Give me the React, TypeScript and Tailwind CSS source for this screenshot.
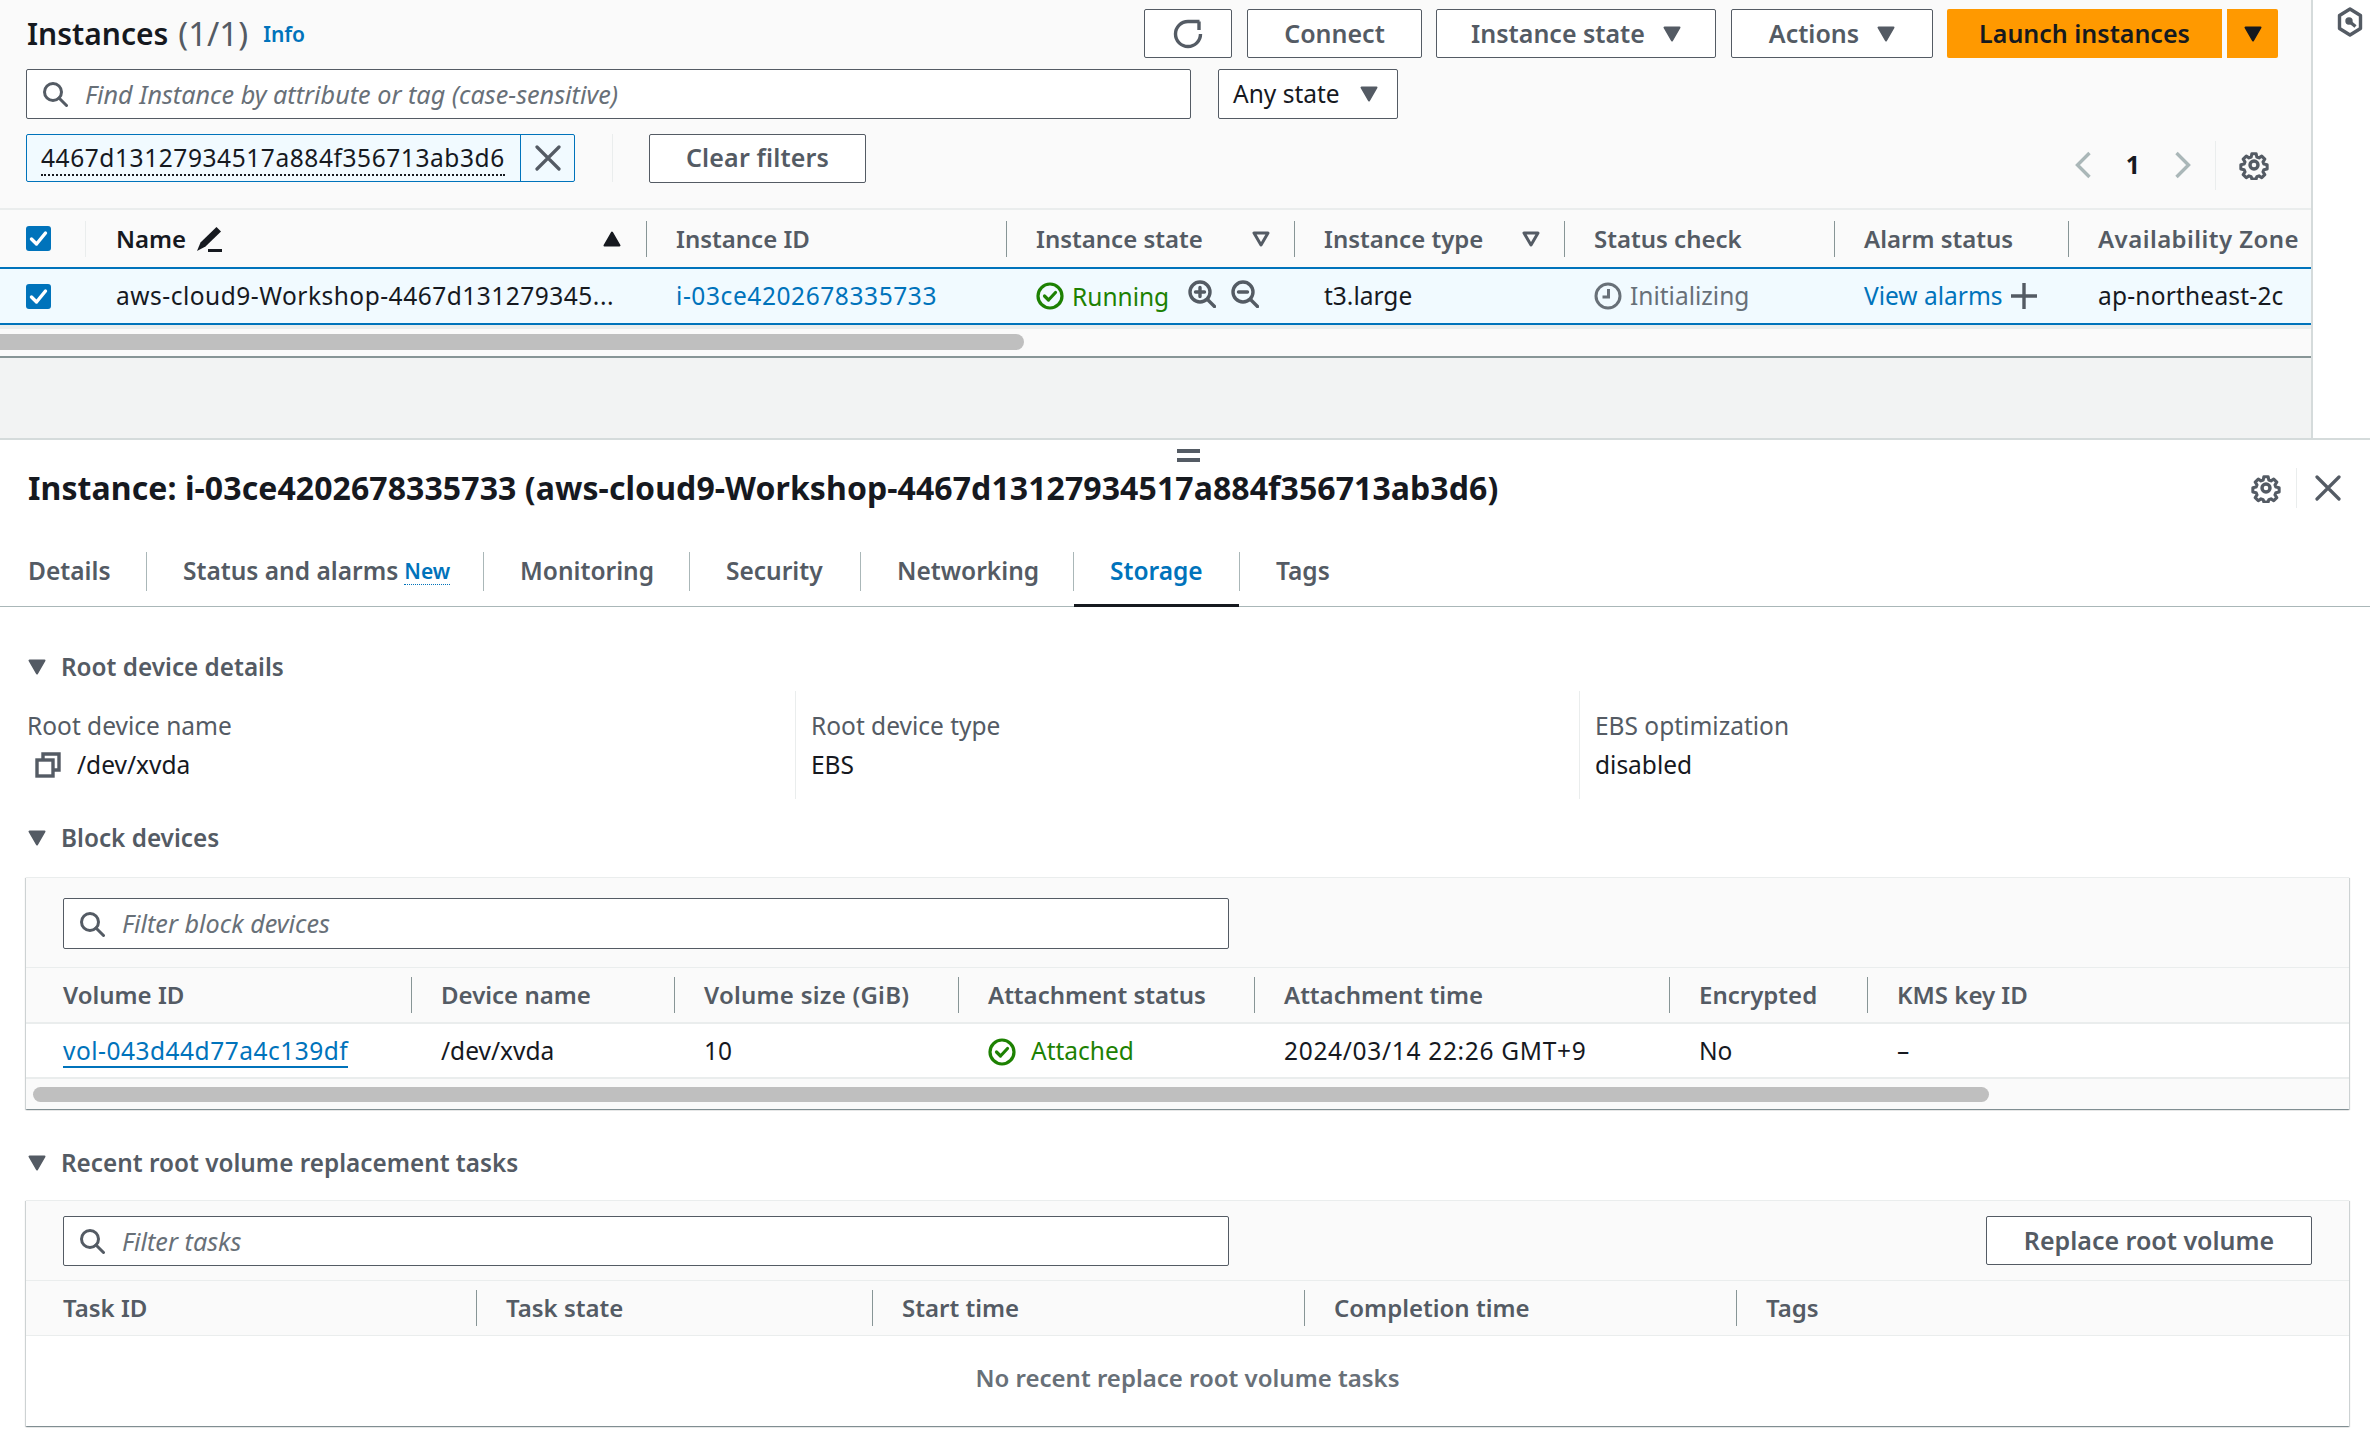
import type { ReactNode } from 'react'

const Caret = ({ className = 'w-[18px] h-[16px] text-[#545b64]' }: { className?: string }) => (
  <svg viewBox="0 0 18 16" className={className} aria-hidden="true">
    <path d="M1.500 1.500h15L9 14.500z" fill="currentColor" stroke="currentColor" strokeWidth="2" strokeLinejoin="round" />
  </svg>
)

const SearchIcon = () => (
  <svg viewBox="0 0 26 26" className="w-[26px] h-[26px] shrink-0 text-[#545b64]" fill="none" stroke="currentColor" strokeWidth="3" aria-hidden="true">
    <circle cx="11" cy="11" r="8.500" />
    <path d="M17 17l7.500 7.500" strokeLinecap="round" />
  </svg>
)

const GearIcon = () => (
  <svg viewBox="0 0 30 30" className="w-[30px] h-[30px] text-[#545b64]" fill="none" stroke="currentColor" strokeWidth="3.400" aria-hidden="true">
    <path d="M12.600 2.500h4.800l.7 3.600 2.500 1 3-2 3.400 3.400-2 3 1 2.500 3.600.7v4.800l-3.600.7-1 2.500 2 3-3.400 3.400-3-2-2.500 1-.7 2.400h-4.800l-.7-2.400-2.500-1-3 2-3.400-3.400 2-3-1-2.500-3.600-.7v-4.800l3.600-.7 1-2.500-2-3 3.400-3.400 3 2 2.500-1z" strokeLinejoin="round" transform="translate(1.500 1.500) scale(.9)" />
    <circle cx="15" cy="15" r="4" />
  </svg>
)

const CloseIcon = ({ className }: { className: string }) => (
  <svg viewBox="0 0 26 26" className={className} fill="none" stroke="currentColor" strokeWidth="3.200" strokeLinecap="round" aria-hidden="true">
    <path d="M2 2l22 22M24 2L2 24" />
  </svg>
)

const CheckCircle = () => (
  <svg viewBox="0 0 28 28" className="w-[28px] h-[28px] shrink-0 text-[#1d8102]" fill="none" stroke="currentColor" strokeWidth="3.200" aria-hidden="true">
    <circle cx="14" cy="14" r="12" />
    <path d="M8.500 14l4 4 7-7.500" strokeLinecap="round" strokeLinejoin="round" />
  </svg>
)

const Checkbox = () => (
  <span className="w-[25px] h-[25px] rounded-[3px] bg-[#0073bb] flex items-center justify-center">
    <svg viewBox="0 0 25 25" className="w-[25px] h-[25px]" fill="none" stroke="#fff" strokeWidth="3.400" strokeLinecap="round" strokeLinejoin="round" aria-hidden="true">
      <path d="M5.500 13l5 5 9-11" />
    </svg>
  </span>
)

const Zoom = ({ plus }: { plus?: boolean }) => (
  <svg viewBox="0 0 28 28" className="w-[28px] h-[28px] text-[#545b64]" fill="none" stroke="currentColor" strokeWidth="3.400" strokeLinecap="round" aria-hidden="true">
    <circle cx="12" cy="12" r="10" />
    <path d="M19.500 19.500l7 7" />
    <path d={plus ? 'M7.500 12h9M12 7.500v9' : 'M7.500 12h9'} />
  </svg>
)

const FilterCaret = () => (
  <svg viewBox="0 0 18 16" className="w-[18px] h-[16px] text-[#545b64]" fill="none" stroke="currentColor" strokeWidth="3" strokeLinejoin="round" aria-hidden="true">
    <path d="M2 2h14L9 14z" />
  </svg>
)

function Button({ className, children }: { className: string; children: ReactNode }) {
  return (
    <div className={`h-[49px] flex items-center justify-center gap-[18px] bg-white border border-[#545b64] rounded-[2px] text-[25px] font-semibold text-[#545b64] ${className}`}>
      {children}
    </div>
  )
}

function FilterInput({ className, placeholder }: { className: string; placeholder: string }) {
  return (
    <div className={`flex items-center gap-[17px] pl-[15px] bg-white border border-[#545b64] rounded-[2px] ${className}`}>
      <SearchIcon />
      <span className="pt-[1px] italic text-[25.200px] text-[#687078]">{placeholder}</span>
    </div>
  )
}

// one header cell: the separator starts the cell, the text sits 29px after it
function Th({ className, children }: { className: string; children: ReactNode }) {
  return (
    <div className={`h-full flex items-center shrink-0 ${className}`}>
      <span className="w-px h-[36px] bg-[#879596] shrink-0" />
      <span className="ml-[29px] flex-1 flex items-center pr-[24px] text-[24px] font-semibold text-[#545b64] whitespace-nowrap">{children}</span>
    </div>
  )
}

function Td({ className, children }: { className: string; children: ReactNode }) {
  return <div className={`h-full flex items-center shrink-0 pl-[30px] text-[24.500px] text-[#16191f] whitespace-nowrap ${className}`}>{children}</div>
}

function SectionTitle({ children }: { children: ReactNode }) {
  return (
    <div className="h-[40px] pl-[28px] flex items-center gap-[15px] text-[24.300px] font-semibold text-[#545b64]">
      <Caret />
      {children}
    </div>
  )
}

function Field({ className, label, children }: { className: string; label: string; children: ReactNode }) {
  return (
    <div className={`h-full pt-[19px] ${className}`}>
      <div className="h-[32px] flex items-center text-[24.500px] text-[#545b64]">{label}</div>
      <div className="mt-[7px] h-[32px] flex items-center text-[24.500px] text-[#16191f]">{children}</div>
    </div>
  )
}

function Tab({ className, active, children }: { className: string; active?: boolean; children: ReactNode }) {
  return (
    <div className={`relative h-full flex items-center shrink-0 text-[24.500px] font-semibold ${active ? 'text-[#0073bb]' : 'text-[#545b64]'} ${className}`}>
      {children}
      {active && <span className="absolute left-0 right-0 bottom-[-1px] h-[3px] bg-[#16191f]" />}
    </div>
  )
}

const TabSep = () => <span className="w-px h-[39px] bg-[#aab7b8] self-center shrink-0" />

const Card = ({ className, children }: { className: string; children: ReactNode }) => (
  <div className={`mx-[26px] w-[2323px] bg-white border-t border-[#eaeded] shadow-[0_1px_1px_0_rgba(0,28,36,0.3),1px_1px_1px_0_rgba(0,28,36,0.15),-1px_1px_1px_0_rgba(0,28,36,0.15)] ${className}`}>
    {children}
  </div>
)

export default function App() {
  return (
    <div className="w-[2370px] h-[1456px] overflow-hidden bg-white [font-family:'Noto_Sans',sans-serif]">
      {/* instances list */}
      <div className="h-[440px] flex border-b-2 border-[#d5dbdb]">
        <div className="w-[2313px] shrink-0 border-r-2 border-[#d5dbdb] bg-[#f2f3f3]">
          <div className="h-[358px] bg-[#fafafa] border-b-2 border-[#879596]">
            <div className="h-[58px] pt-[9px] pl-[27px] pr-[33px] flex items-start">
              <div className="h-[49px] flex items-center">
                <span className="text-[30px] font-semibold text-[#16191f]">Instances</span>
                <span className="ml-[10px] text-[33px] text-[#545b64]">(1/1)</span>
                <span className="ml-[15px] mt-[3px] text-[21px] font-semibold text-[#0073bb]">Info</span>
              </div>
              <div className="ml-auto flex">
                <Button className="w-[88px]">
                  <svg viewBox="0 0 32 32" className="w-[32px] h-[32px]" fill="none" stroke="currentColor" strokeWidth="3.400" aria-hidden="true">
                    <path d="M28.500 16A12.500 12.500 0 1 1 16 3.500h11.500" />
                    <path d="M27 12V3.500" />
                  </svg>
                </Button>
                <Button className="ml-[15px] w-[175px]">Connect</Button>
                <Button className="ml-[14px] w-[280px]">Instance state <Caret /></Button>
                <Button className="ml-[15px] w-[202px]">Actions <Caret /></Button>
                <div className="ml-[14px] w-[275px] h-[49px] rounded-l-[2px] bg-[#ff9900] flex items-center justify-center text-[25px] font-semibold text-[#16191f]">Launch instances</div>
                <div className="ml-[5px] w-[51px] h-[49px] rounded-r-[2px] bg-[#ff9900] flex items-center justify-center">
                  <Caret className="w-[18px] h-[16px] text-[#16191f]" />
                </div>
              </div>
            </div>
            <div className="mt-[11px] pl-[26px] flex gap-[27px]">
              <FilterInput className="w-[1165px] h-[50px]" placeholder="Find Instance by attribute or tag (case-sensitive)" />
              <div className="w-[180px] h-[50px] pl-[14px] pr-[19px] flex items-center justify-between bg-white border border-[#545b64] rounded-[2px] text-[24.500px] text-[#16191f]">
                Any state <Caret />
              </div>
            </div>
            <div className="mt-[15px] h-[48px] pl-[26px] pr-[42px] flex items-center">
              <div className="w-[549px] h-full flex bg-[#f1faff] border border-[#0073bb] rounded-[2px]">
                <div className="w-[494px] pl-[14px] pt-[2px] flex items-center border-r border-[#0073bb]">
                  <span className="text-[24.500px] leading-[32px] tracking-[0.57px] text-[#16191f] border-b-2 border-dotted border-[#16191f]">4467d13127934517a884f356713ab3d6</span>
                </div>
                <div className="flex-1 flex items-center justify-center text-[#545b64]">
                  <CloseIcon className="w-[26px] h-[26px]" />
                </div>
              </div>
              <span className="ml-[37px] w-px h-full bg-[#eaeded]" />
              <Button className="ml-[36px] w-[217px] h-[48px] tracking-[0.15px]">Clear filters</Button>
              <div className="ml-auto mt-[14px] flex items-center text-[#aab7b8]">
                <svg viewBox="0 0 16 28" className="w-[16px] h-[28px]" fill="none" stroke="currentColor" strokeWidth="3.400" aria-hidden="true"><path d="M14.500 2L2.500 14l12 12" /></svg>
                <span className="ml-[35px] text-[25px] font-bold text-[#16191f]">1</span>
                <svg viewBox="0 0 16 28" className="ml-[35px] w-[16px] h-[28px]" fill="none" stroke="currentColor" strokeWidth="3.400" aria-hidden="true"><path d="M1.500 2l12 12-12 12" /></svg>
                <span className="ml-[24px] w-px h-[49px] bg-[#eaeded]" />
                <span className="ml-[23px] flex"><GearIcon /></span>
              </div>
            </div>
            {/* table header */}
            <div className="mt-[26px] h-[59px] flex border-t-2 border-[#eaeded]">
              <div className="w-[86px] h-full flex items-center justify-between pl-[26px] shrink-0">
                <Checkbox />
                <span className="w-px h-[36px] bg-[#eaeded]" />
              </div>
              <div className="w-[560px] h-full shrink-0 pl-[30px] pr-[25px] flex items-center text-[24px] font-semibold text-[#16191f]">
                Name
                <svg viewBox="0 0 26 26" className="ml-[10px] w-[26px] h-[26px]" fill="currentColor" aria-hidden="true">
                  <path d="M20.500 1l4.500 4.500L9.500 20.500 1 25l3.500-8.500z" />
                  <path d="M12 23h14v3H12z" />
                </svg>
                <svg viewBox="0 0 18 16" className="ml-auto w-[18px] h-[16px]" aria-hidden="true"><path d="M9 1.500l7.500 13h-15z" fill="currentColor" stroke="currentColor" strokeWidth="2" strokeLinejoin="round" /></svg>
              </div>
              <Th className="w-[360px]">Instance ID</Th>
              <Th className="w-[288px]"><span className="flex-1">Instance state</span><FilterCaret /></Th>
              <Th className="w-[270px]"><span className="flex-1">Instance type</span><FilterCaret /></Th>
              <Th className="w-[270px]">Status check</Th>
              <Th className="w-[234px]">Alarm status</Th>
              <Th className="w-[245px]"><span className="tracking-[0.45px]">Availability Zone</span></Th>
            </div>
            {/* selected row */}
            <div className="h-[58px] flex bg-[#f1faff] border-y-2 border-[#0073bb]">
              <div className="w-[86px] h-full flex items-center pl-[26px] shrink-0"><Checkbox /></div>
              <div className="w-[560px] h-full shrink-0 pl-[30px] flex items-center text-[24.500px] tracking-[0.5px] text-[#16191f] whitespace-nowrap">
                aws-cloud9-Workshop-4467d131279345...
              </div>
              <Td className="w-[360px]"><span className="tracking-[0.58px] text-[#0073bb]">i-03ce4202678335733</span></Td>
              <Td className="w-[288px]">
                <CheckCircle />
                <span className="ml-[8px] mt-[3px] text-[#1d8102]">Running</span>
                <span className="ml-[19px] mb-[5px] flex gap-[15px]"><Zoom plus /><Zoom /></span>
              </Td>
              <Td className="w-[270px]">t3.large</Td>
              <Td className="w-[270px]">
                <svg viewBox="0 0 28 28" className="w-[28px] h-[28px] mr-[8px] text-[#687078]" fill="none" stroke="currentColor" strokeWidth="3" aria-hidden="true">
                  <circle cx="14" cy="14" r="12" />
                  <path d="M14.500 7v8H8.500" />
                </svg>
                <span className="text-[#687078]">Initializing</span>
              </Td>
              <Td className="w-[234px]">
                <span className="text-[#0073bb]">View alarms</span>
                <svg viewBox="0 0 26 26" className="ml-[8px] w-[26px] h-[26px] text-[#545b64]" fill="none" stroke="currentColor" strokeWidth="3.400" aria-hidden="true"><path d="M0 13h26M13 0v26" /></svg>
              </Td>
              <Td className="w-[245px]"><span className="tracking-[0.2px]">ap-northeast-2c</span></Td>
            </div>
            <div className="h-[4px] bg-[#eaeded]" />
            <div className="h-[16px] mt-[5px] w-[1024px] rounded-r-full bg-[#bfbfbf]" />
          </div>
        </div>
        <div className="flex-1 flex justify-end pt-[7px] pr-[7px] text-[#545b64]">
          <svg viewBox="0 0 26 30" className="w-[26px] h-[30px]" fill="none" stroke="currentColor" strokeWidth="3.400" aria-hidden="true">
            <path d="M13 2l10.500 6.500v13L13 28 2.500 21.500v-13z" strokeLinejoin="round" />
            <circle cx="12" cy="14" r="2" fill="currentColor" />
            <path d="M13 15l5.500 4.500" />
          </svg>
        </div>
      </div>

      {/* split panel */}
      <div className="h-[26px] pt-[9px] pl-[7px] flex flex-col items-center gap-[5px]">
        <span className="w-[23px] h-[4px] bg-[#545b64]" />
        <span className="w-[23px] h-[4px] bg-[#545b64]" />
      </div>
      <div className="h-[44px] pl-[28px] pr-[29px] flex items-center">
        <span className="text-[32px] tracking-[0.08px] font-bold text-[#16191f]">Instance: i-03ce4202678335733 (aws-cloud9-Workshop-4467d13127934517a884f356713ab3d6)</span>
        <span className="ml-auto flex"><GearIcon /></span>
        <span className="ml-[15px] w-px h-[40px] bg-[#eaeded]" />
        <CloseIcon className="ml-[18px] w-[26px] h-[26px] text-[#545b64]" />
      </div>
      <div className="mt-[26px] h-[71px] flex border-b border-[#aab7b8]">
        <Tab className="w-[146px] pl-[28px]">Details</Tab>
        <TabSep />
        <Tab className="w-[336px] pl-[36px]">Status and alarms<span className="ml-[6px] text-[21px] text-[#0073bb] border-b border-dotted border-[#0073bb] leading-[26px]">New</span></Tab>
        <TabSep />
        <Tab className="w-[205px] pl-[36px]">Monitoring</Tab>
        <TabSep />
        <Tab className="w-[170px] pl-[36px]">Security</Tab>
        <TabSep />
        <Tab className="w-[212px] pl-[36px]">Networking</Tab>
        <TabSep />
        <Tab active className="w-[165px] pl-[36px]">Storage</Tab>
        <TabSep />
        <Tab className="pl-[36px]">Tags</Tab>
      </div>

      <div className="pt-[40px]">
        <SectionTitle>Root device details</SectionTitle>
        <div className="mt-[4px] h-[108px] flex">
          <Field className="w-[795px] pl-[27px]" label="Root device name">
            <svg viewBox="0 0 26 26" className="ml-[8px] w-[26px] h-[26px] text-[#545b64]" fill="none" stroke="currentColor" strokeWidth="3.400" aria-hidden="true">
              <rect x="2" y="8" width="16" height="16" />
              <path d="M8 8V2h16v16h-6" />
            </svg>
            <span className="ml-[16px]">/dev/xvda</span>
          </Field>
          <Field className="w-[784px] pl-[15px] border-l border-[#eaeded]" label="Root device type">EBS</Field>
          <Field className="flex-1 pl-[15px] border-l border-[#eaeded]" label="EBS optimization">disabled</Field>
        </div>
        <div className="mt-[19px]"><SectionTitle>Block devices</SectionTitle></div>
        <Card className="mt-[19px]">
          <div className="bg-[#fafafa]">
            <div className="pl-[37px] pt-[20px] pb-[18px] border-b border-[#eaeded]">
              <FilterInput className="w-[1166px] h-[51px]" placeholder="Filter block devices" />
            </div>
            <div className="h-[56px] flex pl-[37px] border-b-2 border-[#eaeded]">
              <div className="w-[348px] h-full shrink-0 flex items-center text-[24px] font-semibold text-[#545b64]">Volume ID</div>
              <Th className="w-[263px]">Device name</Th>
              <Th className="w-[284px]"><span className="tracking-[0.25px]">Volume size (GiB)</span></Th>
              <Th className="w-[296px]">Attachment status</Th>
              <Th className="w-[415px]">Attachment time</Th>
              <Th className="w-[198px]">Encrypted</Th>
              <Th className="w-[260px]">KMS key ID</Th>
            </div>
          </div>
          <div className="h-[55px] pt-[2px] flex pl-[7px] border-b-2 border-[#eaeded]">
            <Td className="w-[378px]">
              <span className="text-[#0073bb] tracking-[0.5px] leading-[30px] border-b-2 border-[#0073bb]">vol-043d44d77a4c139df</span>
            </Td>
            <Td className="w-[263px]">/dev/xvda</Td>
            <Td className="w-[284px]">10</Td>
            <Td className="w-[296px]">
              <CheckCircle />
              <span className="ml-[15px] text-[#1d8102]">Attached</span>
            </Td>
            <Td className="w-[415px]"><span className="tracking-[0.68px]">2024/03/14 22:26 GMT+9</span></Td>
            <Td className="w-[198px]">No</Td>
            <Td className="w-[260px]">–</Td>
          </div>
          <div className="h-[30px] pt-[8px] pl-[7px] bg-[#fafafa]">
            <div className="w-[1956px] h-[15px] rounded-full bg-[#bfbfbf]" />
          </div>
        </Card>
        <div className="mt-[34px]"><SectionTitle>Recent root volume replacement tasks</SectionTitle></div>
        <Card className="mt-[17px]">
          <div className="bg-[#fafafa]">
            <div className="pl-[37px] pr-[37px] pt-[15px] pb-[14px] flex justify-between border-b border-[#eaeded]">
              <FilterInput className="w-[1166px] h-[50px]" placeholder="Filter tasks" />
              <Button className="w-[326px] h-[48px]">Replace root volume</Button>
            </div>
            <div className="h-[55px] flex pl-[37px] border-b border-[#eaeded]">
              <div className="w-[413px] h-full shrink-0 flex items-center text-[24px] font-semibold text-[#545b64]">Task ID</div>
              <Th className="w-[396px]">Task state</Th>
              <Th className="w-[432px]">Start time</Th>
              <Th className="w-[432px]">Completion time</Th>
              <Th className="w-[200px]">Tags</Th>
            </div>
          </div>
          <div className="h-[90px] pb-[7px] flex items-center justify-center text-[24px] font-semibold text-[#687078]">No recent replace root volume tasks</div>
        </Card>
      </div>
    </div>
  )
}
